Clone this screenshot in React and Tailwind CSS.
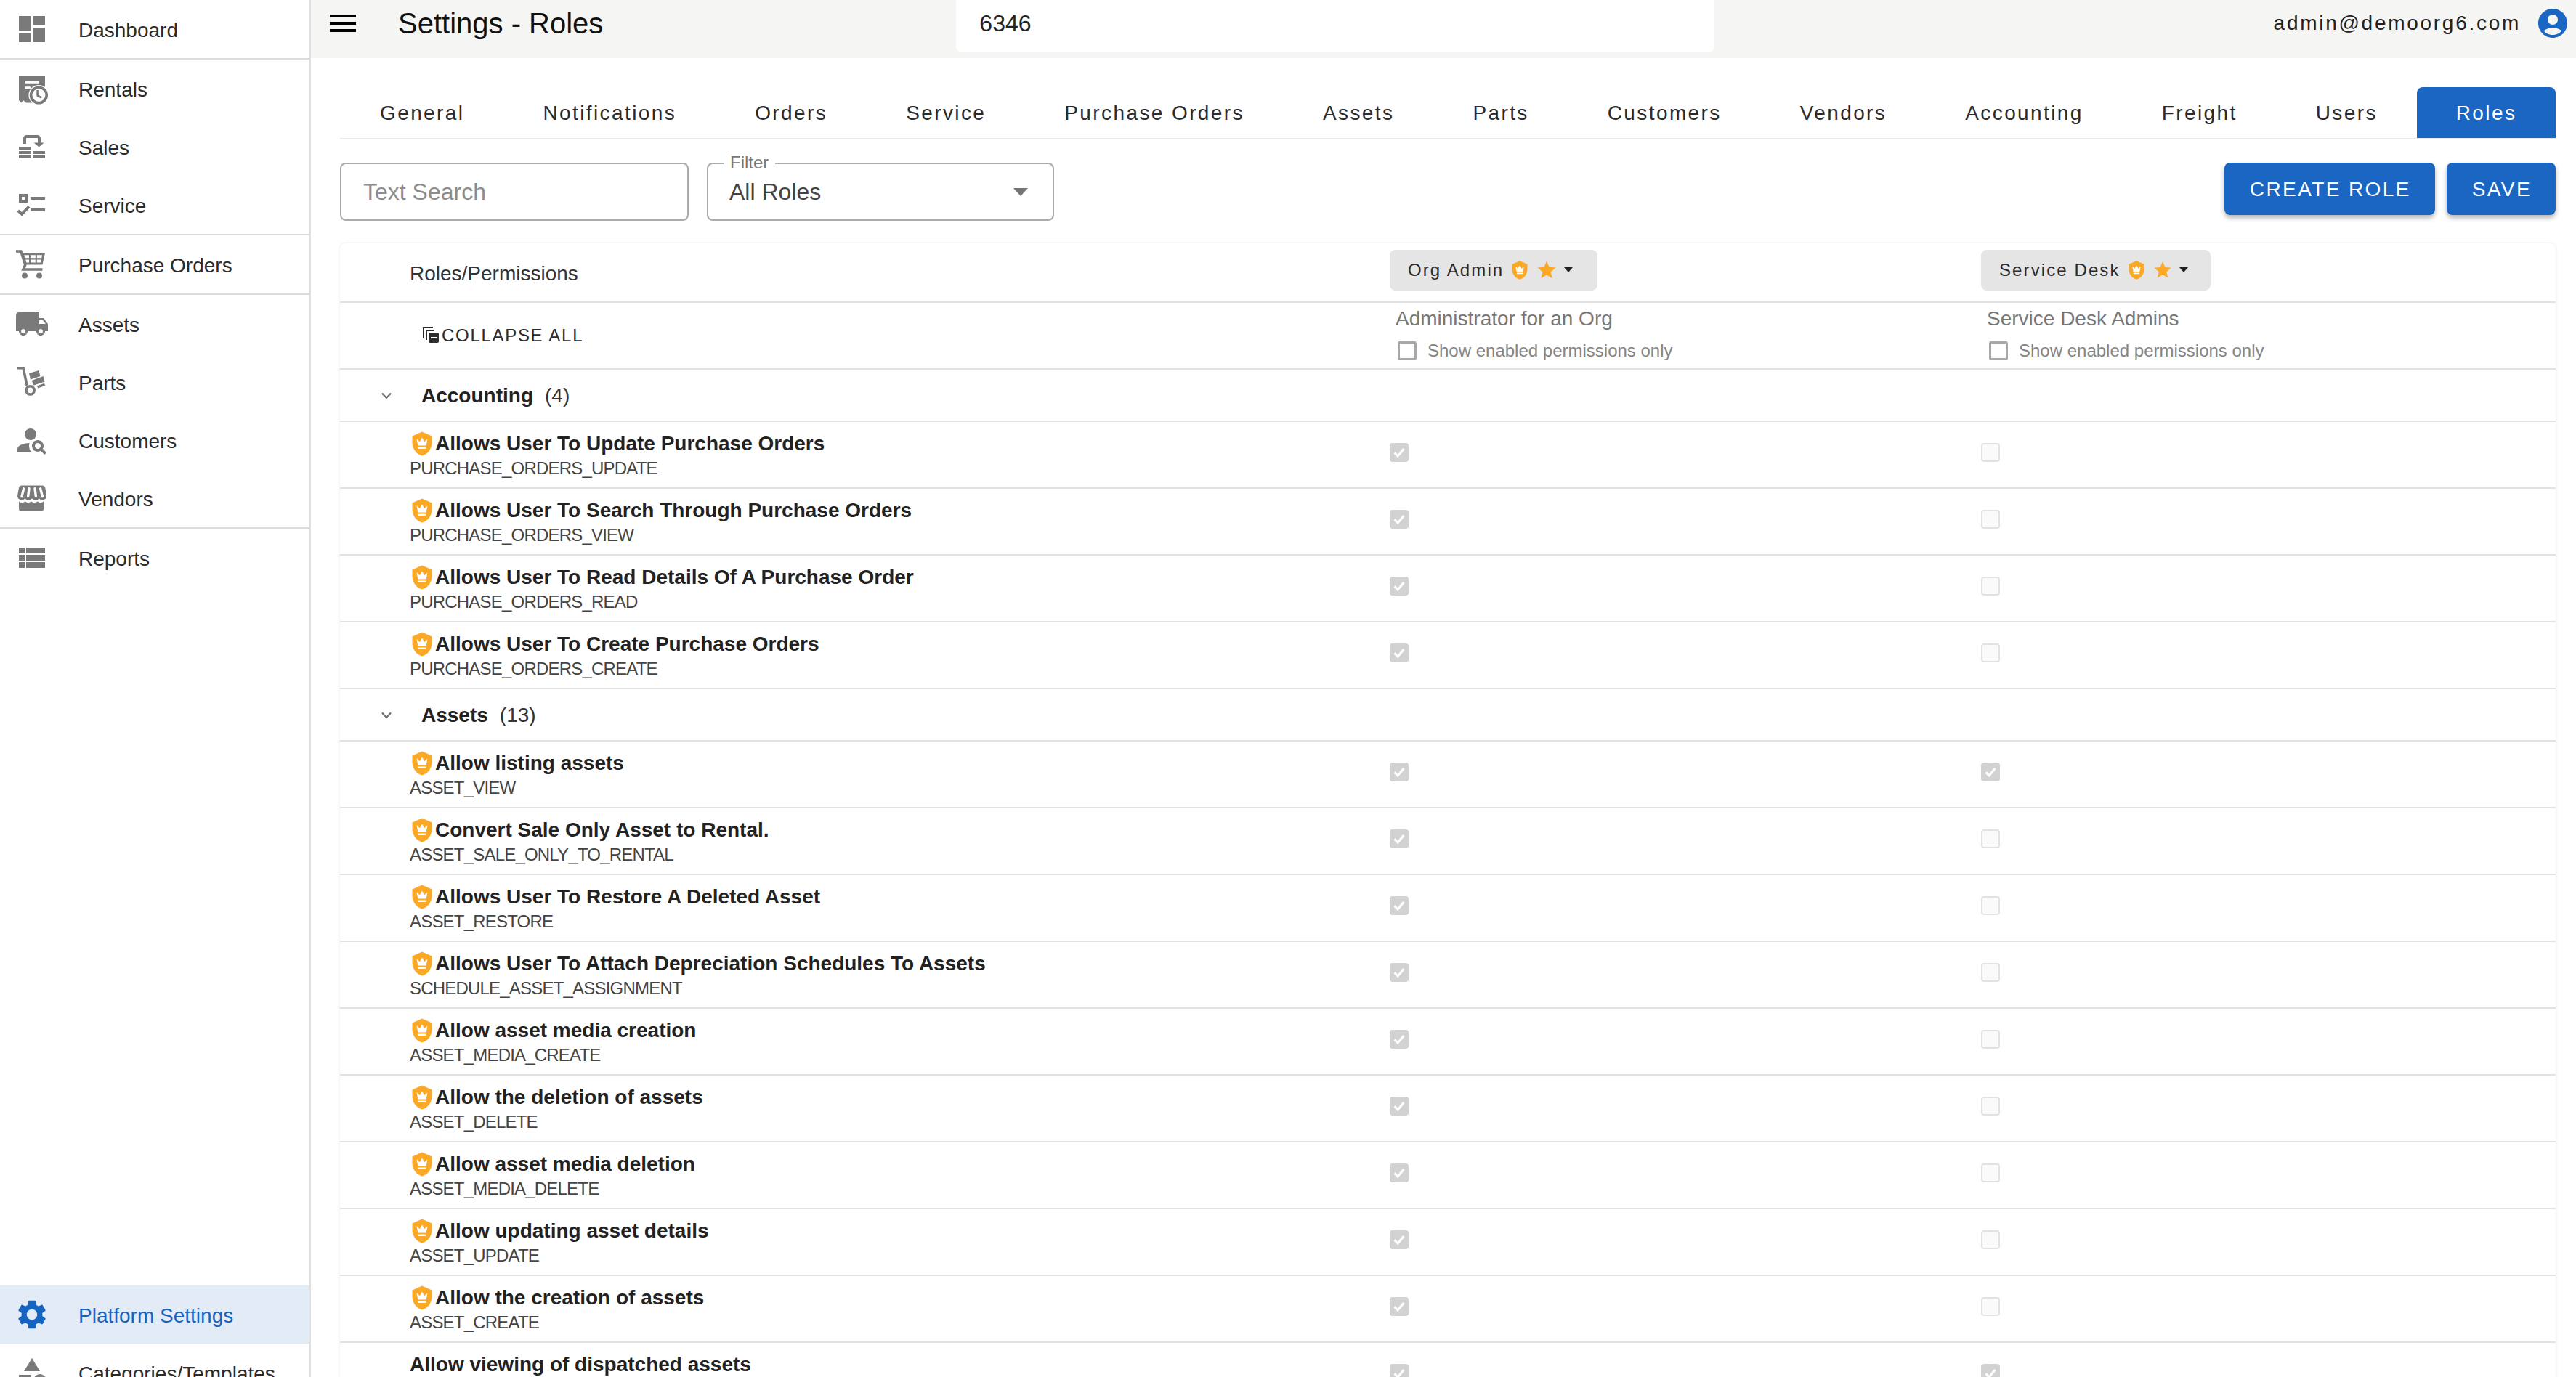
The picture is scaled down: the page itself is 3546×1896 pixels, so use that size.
import React from "react";

const G = "#7a7a7a";
const Svg = ({ size = 48, cls = "", fill = G, children }) => (
  <svg width={size} height={size} viewBox="0 0 24 24" fill={fill} className={`shrink-0 ${cls}`}>{children}</svg>
);

const icons = {
  dashboard: <path d="M3 13h8V3H3zm0 8h8v-6H3zm10 0h8V11h-8zm0-18v6h8V3z" />,
  rentals: (
    <>
      <path d="M3 3h18v12l-4 6.800h-9l-2-1.800-1.400 1.800L3 20z" />
      <path d="M7 7.700h10M7 11.300h4" stroke="#fff" strokeWidth="1.350" />
      <circle cx="16.700" cy="16.500" r="7" fill="#fff" />
      <circle cx="16.700" cy="16.500" r="5.400" fill="#fff" stroke={G} strokeWidth="1.800" />
      <path d="M15.800 13v3.700l2.800 1.600" fill="none" stroke={G} strokeWidth="1.300" />
    </>
  ),
  sales: (
    <>
      <path d="M3 12h8v2H3zM3 15h8v2H3zM3 18h8v2H3zM13 15h8v2h-8zM13 18h8v2h-8z" />
      <path d="M7 10V6.200a1.200 1.200 0 0 1 1.200-1.200H15.800a1.200 1.200 0 0 1 1.200 1.200V10" fill="none" stroke={G} strokeWidth="2" />
      <path d="M13.300 9.300h7l-3.500 3z" />
    </>
  ),
  service: (
    <>
      <path d="M3 4.500h6v6H3zm2 2v2h2v-2z" fillRule="evenodd" />
      <path d="M11 6.500h10v2H11zM11 14.500h10v2H11z" />
      <path d="M2.400 16l2.600 2.400 5-5.200" fill="none" stroke={G} strokeWidth="2" />
    </>
  ),
  cart: (
    <>
      <path d="M1 3h3.400l3 9.200-1.400 3.300h13.200" fill="none" stroke={G} strokeWidth="1.800" />
      <path d="M5 4.200h16l-1.800 8H7z" />
      <path d="M6.600 5.600h3.400v2h-2.800zM11 5.600h3.400v2H11zM15.400 5.600h3.600l-.4 2h-3.200zM7.600 8.800H10v2H8.200zM11 8.800h3.400v2H11zM15.400 8.800h2.900l-.4 2h-2.500z" fill="#fff" />
      <circle cx="7" cy="19.800" r="2" />
      <circle cx="17" cy="19.800" r="2" />
    </>
  ),
  truck: (
    <path d="M20 8h-3V4H3c-1.100 0-2 .9-2 2v11h2c0 1.660 1.340 3 3 3s3-1.340 3-3h6c0 1.660 1.340 3 3 3s3-1.340 3-3h2v-5zM6 18.500c-.83 0-1.500-.67-1.500-1.500s.67-1.500 1.500-1.500 1.500.67 1.500 1.500-.67 1.500-1.500 1.500m13.500-9 1.960 2.500H17V9.500zM18 18.500c-.83 0-1.500-.67-1.500-1.500s.67-1.500 1.500-1.500 1.500.67 1.500 1.500-.67 1.500-1.500 1.500" />
  ),
  parts: (
    <>
      <path d="M2 2.400h4l2.600 12" fill="none" stroke={G} strokeWidth="1.800" />
      <circle cx="10.800" cy="17.700" r="2.800" fill="none" stroke={G} strokeWidth="1.800" />
      <path d="M10 6l6.700-2 1 4-6.700 2.200zM11.700 11l8-3 1.100 3.800-7.500 2.500z" />
      <path d="M15.800 15.400l5-1.700" fill="none" stroke={G} strokeWidth="1.700" />
    </>
  ),
  customers: (
    <path d="M11 8m-4 0a4 4 0 1 0 8 0a4 4 0 1 0 -8 0 M10.350 14.010C7.620 13.910 2 15.270 2 18v2h9.540c-2.470-2.760-1.230-5.890-1.190-5.990 M19.430 18.020c.36-.59.57-1.280.57-2.020 0-2.210-1.790-4-4-4s-4 1.790-4 4 1.790 4 4 4c.74 0 1.430-.22 2.020-.57L20.590 22 22 20.590zM16 18c-1.100 0-2-.9-2-2s.9-2 2-2 2 .9 2 2-.9 2-2 2" fillRule="evenodd" />
  ),
  vendors: (
    <>
      <path d="M3 14.200c1.400 1 2.900 1 4.300 0 1.400 1 2.800 1 4.200 0 1.400 1 2.900 1 4.300 0 1.400 1 2.800 1 4.200 0v5a1.500 1.500 0 0 1-1.500 1.500H4.500A1.500 1.500 0 0 1 3 19.200z" />
      <path d="M5 3.200h14c1 0 1.800.6 2.100 1.600l.9 5c.4 2-1 3.400-2.700 3.400-1.100 0-1.800-.4-2.400-1-.6.6-1.400 1-2.400 1s-1.800-.4-2.500-1c-.6.6-1.400 1-2.400 1s-1.800-.4-2.400-1c-.6.6-1.300 1-2.400 1-1.700 0-3.100-1.400-2.700-3.400l.9-5c.3-1 1.100-1.600 2-1.600z" />
      <path d="M6.300 5.400l-1.300 5.400M10 5.400l-.7 5.400M14 5.400l.7 5.400M17.800 5.400l1.400 5.400" stroke="#fff" strokeWidth="1.700" strokeLinecap="round" />
    </>
  ),
  reports: <path d="M3 14h4v-4H3zm0 5h4v-4H3zM3 9h4V5H3zm5 5h13v-4H8zm0 5h13v-4H8zM8 5v4h13V5z" />,
  categories: (
    <path d="M12 2l-5.500 9h11z M17.500 17.500m-4.500 0a4.500 4.500 0 1 0 9 0a4.500 4.500 0 1 0 -9 0 M3 13.500h8v8H3z" />
  ),
};

const NavItem = ({ icon, label, active }) => (
  <div className={`flex h-[80px] items-center pl-[20px] ${active ? "bg-[#e3ebf7]" : ""}`}>
    {active ? (
      <Svg fill="#1565c0">
        <path d="M19.140 12.940c.04-.3.06-.61.06-.94 0-.32-.02-.64-.07-.94l2.030-1.580c.18-.14.23-.41.12-.61l-1.920-3.320c-.12-.22-.37-.29-.59-.22l-2.390.96c-.5-.38-1.030-.7-1.620-.94l-.36-2.540c-.04-.24-.24-.41-.48-.41h-3.840c-.24 0-.43.17-.47.41l-.36 2.540c-.59.24-1.130.57-1.620.94l-2.390-.96c-.22-.08-.47 0-.59.22L2.740 8.870c-.12.21-.08.47.12.61l2.030 1.580c-.05.3-.09.63-.09.94s.02.64.07.94l-2.030 1.580c-.18.14-.23.41-.12.61l1.920 3.320c.12.22.37.29.59.22l2.390-.96c.5.38 1.030.7 1.620.94l.36 2.540c.05.24.24.41.48.41h3.840c.24 0 .44-.17.47-.41l.36-2.540c.59-.24 1.130-.56 1.620-.94l2.390.96c.22.08.47 0 .59-.22l1.920-3.320c.12-.22.07-.47-.12-.61zM12 15.600c-1.980 0-3.600-1.620-3.600-3.600s1.620-3.600 3.600-3.600 3.600 1.620 3.600 3.600-1.620 3.600-3.600 3.600" />
      </Svg>
    ) : (
      <Svg>{icons[icon]}</Svg>
    )}
    <span className={`ml-[40px] pt-[3px] text-[28px] leading-[36px] ${active ? "text-[#1565c0]" : "text-[#2b2b2b]"}`}>{label}</span>
  </div>
);

const Divider = () => <div className="h-[2px] bg-[#dcdcdc]" />;

const Shield = ({ size = 36, cls = "" }) => (
  <Svg size={size} fill="#faa825" cls={cls}>
    <path d="M12 1 3 5v6c0 5.550 3.840 10.740 9 12 5.160-1.260 9-6.450 9-12V5z" />
    <path d="M7 7.500l2.800 2.600L12 6.400l2.200 3.700L17 7.500l-1.200 6.200H8.200z M8.400 15h7.200v1.600H8.400z" fill="#fff" />
  </Svg>
);

const Star = ({ size = 30 }) => (
  <Svg size={size} fill="#faa825">
    <path d="M12 17.270 18.180 21l-1.640-7.030L22 9.240l-7.190-.61L12 2 9.190 8.630 2 9.240l5.460 4.730L5.820 21z" />
  </Svg>
);

const Caret = () => (
  <svg width="12" height="7" viewBox="0 0 12 7" fill="#222" className="shrink-0">
    <path d="M0 0h12L6 7z" />
  </svg>
);

const RoleChip = ({ label, w, star }) => (
  <div className={`flex h-[56px] items-center rounded-[8px] bg-[#e5e5e5] pl-[25px] ${w}`}>
    <span className="text-[24px] leading-[32px] tracking-[2.100px] text-[#2b2b2b]">{label}</span>
    <Shield size={28} cls="ml-[8px]" />
    <span className="ml-[8px] flex"><Star size={star} /></span>
    <span className="ml-[9px] flex -translate-y-[1px]"><Caret /></span>
  </div>
);

const RoleBox = ({ checked }) =>
  checked ? (
    <div className="flex h-[26px] w-[26px] items-center justify-center rounded-[4px] bg-[#d2d2d2]">
      <svg width="22" height="22" viewBox="0 0 24 24" fill="none" stroke="#fff" strokeWidth="3.400">
        <path d="M5 12.500l5 5 9-11" />
      </svg>
    </div>
  ) : (
    <div className="h-[26px] w-[26px] rounded-[4px] border-2 border-[#e2e2e2] bg-[#fafafa]" />
  );

const OutlineBox = () => <div className="h-[26px] w-[26px] rounded-[3px] border-[3px] border-[#a8a8a8] bg-white" />;

const tabs = ["General", "Notifications", "Orders", "Service", "Purchase Orders", "Assets", "Parts", "Customers", "Vendors", "Accounting", "Freight", "Users"];

const groups = [
  {
    name: "Accounting",
    count: 4,
    rows: [
      ["Allows User To Update Purchase Orders", "PURCHASE_ORDERS_UPDATE"],
      ["Allows User To Search Through Purchase Orders", "PURCHASE_ORDERS_VIEW"],
      ["Allows User To Read Details Of A Purchase Order", "PURCHASE_ORDERS_READ"],
      ["Allows User To Create Purchase Orders", "PURCHASE_ORDERS_CREATE"],
    ],
  },
  {
    name: "Assets",
    count: 13,
    rows: [
      ["Allow listing assets", "ASSET_VIEW", true],
      ["Convert Sale Only Asset to Rental.", "ASSET_SALE_ONLY_TO_RENTAL"],
      ["Allows User To Restore A Deleted Asset", "ASSET_RESTORE"],
      ["Allows User To Attach Depreciation Schedules To Assets", "SCHEDULE_ASSET_ASSIGNMENT"],
      ["Allow asset media creation", "ASSET_MEDIA_CREATE"],
      ["Allow the deletion of assets", "ASSET_DELETE"],
      ["Allow asset media deletion", "ASSET_MEDIA_DELETE"],
      ["Allow updating asset details", "ASSET_UPDATE"],
      ["Allow the creation of assets", "ASSET_CREATE"],
      ["Allow viewing of dispatched assets", "", true, true],
    ],
  },
];

const borderRow = "border-b-2 border-[#e2e2e2]";

const PermRow = ({ title, sub, second, noShield }) => (
  <div className={`flex h-[92px] ${borderRow}`}>
    <div className="w-[1445px] pl-[96px] pt-[14px]">
      <div className="flex h-[32px] items-center">
        {!noShield && <Shield cls="-ml-[1px]" />}
        <span className="text-[28px] font-bold leading-[32px] text-[#222]">{title}</span>
      </div>
      <div className="text-[24px] leading-[36px] tracking-[-0.8px] text-[#444]">{sub}</div>
    </div>
    <div className="w-[814px] pt-[29px]"><RoleBox checked /></div>
    <div className="flex-1 pt-[29px]"><RoleBox checked={second} /></div>
  </div>
);

const RoleInfo = ({ desc }) => (
  <div className="pl-[8px] pt-[6px]">
    <div className="text-[28px] leading-[32px] text-[#777]">{desc}</div>
    <div className="mt-[14px] flex items-center">
      <span className="ml-[3px] flex"><OutlineBox /></span>
      <span className="ml-[15px] text-[24px] leading-[28px] text-[#858585]">Show enabled permissions only</span>
    </div>
  </div>
);

export default function App() {
  return (
    <div className="flex h-[1896px] w-[3546px] overflow-hidden bg-white font-['Liberation_Sans',Arial,sans-serif] text-[#222]">
      <aside className="w-[428px] shrink-0 border-r-2 border-[#e0e0e0]">
        <NavItem icon="dashboard" label="Dashboard" />
        <Divider />
        <NavItem icon="rentals" label="Rentals" />
        <NavItem icon="sales" label="Sales" />
        <NavItem icon="service" label="Service" />
        <Divider />
        <NavItem icon="cart" label="Purchase Orders" />
        <Divider />
        <NavItem icon="truck" label="Assets" />
        <NavItem icon="parts" label="Parts" />
        <NavItem icon="customers" label="Customers" />
        <NavItem icon="vendors" label="Vendors" />
        <Divider />
        <NavItem icon="reports" label="Reports" />
        <div className="mt-[962px]">
          <NavItem active label="Platform Settings" />
          <NavItem icon="categories" label="Categories/Templates" />
        </div>
      </aside>

      <main className="min-w-0 flex-1">
        <header className="flex h-[80px] items-start bg-[#f5f5f3]">
          <div className="ml-[20px] mt-[8px] flex">
            <Svg fill="#000"><path d="M3 18h18v-2H3zm0-5h18v-2H3zm0-5h18V6H3z" /></Svg>
          </div>
          <h1 className="ml-[52px] mt-[12px] text-[40px] font-normal leading-[40px] text-[#111]">Settings - Roles</h1>
          <div className="ml-[486px] flex h-[72px] w-[1044px] items-center rounded-b-[8px] bg-white pl-[32px] pb-[8px] text-[32px] text-[#222]">6346</div>
          <div className="ml-auto mt-[8px] flex items-center pr-[8px]">
            <span className="text-[28px] leading-[48px] tracking-[2.720px] text-[#222]">admin@demoorg6.com</span>
            <Svg fill="#1a66c2" cls="ml-[20px]">
              <path d="M12 2C6.480 2 2 6.480 2 12s4.480 10 10 10 10-4.480 10-10S17.520 2 12 2m0 4c1.930 0 3.500 1.570 3.500 3.500S13.930 13 12 13s-3.500-1.570-3.500-3.500S10.070 6 12 6m0 14c-2.030 0-4.430-.82-6.140-2.880C7.550 15.800 9.680 15 12 15s4.450.8 6.140 2.120C16.430 19.180 14.030 20 12 20" />
            </Svg>
          </div>
        </header>

        <div className="ml-[40px] mr-[28px] mt-[40px]">
          <nav className="flex h-[72px] items-stretch border-b-2 border-[#e8e8e8]">
            <div className="flex min-w-0 flex-1 pl-[1px]">
              {tabs.map((t) => (
                <div key={t} className="flex h-[70px] shrink-0 items-center whitespace-nowrap px-[54px] pt-[2px] text-[28px] tracking-[2.400px] text-[#2b2b2b]">{t}</div>
              ))}
            </div>
            <div className="relative flex h-[70px] w-[191px] shrink-0 items-center justify-center rounded-t-[8px] bg-[#1a66c2] pt-[2px] text-[28px] tracking-[2.400px] text-white">Roles</div>
          </nav>

          <div className="mt-[32px] flex items-start">
            <input
              placeholder="Text Search"
              className="h-[80px] w-[480px] rounded-[8px] border-2 border-[#ababab] pl-[30px] text-[32px] outline-none placeholder:text-[#8c8c8c]"
            />
            <div className="relative ml-[25px] flex h-[80px] w-[478px] items-center justify-between rounded-[8px] border-2 border-[#ababab] pl-[29px] pr-[34px]">
              <span className="absolute -top-[16px] left-[21px] bg-white px-[9px] text-[24px] leading-[28px] text-[#777]">Filter</span>
              <span className="text-[32px] text-[#444]">All Roles</span>
              <svg width="20" height="11" viewBox="0 0 20 11" fill="#757575"><path d="M0 0h20L10 11z" /></svg>
            </div>
            <button className="ml-auto h-[72px] rounded-[8px] bg-[#1a66c2] pl-[35px] pr-[33px] pt-[1px] text-[28px] tracking-[2.400px] text-white shadow-[0_4px_6px_rgba(0,0,0,0.3)]">CREATE ROLE</button>
            <button className="ml-[16px] h-[72px] rounded-[8px] bg-[#1a66c2] pl-[35px] pr-[33px] pt-[1px] text-[28px] tracking-[2.400px] text-white shadow-[0_4px_6px_rgba(0,0,0,0.3)]">SAVE</button>
          </div>

          <section className="mt-[31px] rounded-[8px] bg-white shadow-[0_0_4px_rgba(0,0,0,0.1)]">
            <div className={`flex h-[82px] ${borderRow}`}>
              <div className="flex w-[1445px] items-center pl-[96px] pt-[4px] text-[28px] text-[#333]">Roles/Permissions</div>
              <div className="w-[814px] pt-[9px]"><RoleChip label="Org Admin" w="w-[286px]" star={30} /></div>
              <div className="flex-1 pt-[9px]"><RoleChip label="Service Desk" w="w-[316px]" star={28} /></div>
            </div>
            <div className={`flex h-[92px] ${borderRow}`}>
              <div className="flex w-[1445px] items-start pl-[114px] pt-[33px]">
                <svg width="22" height="22" viewBox="0 0 22 22" fill="#2b2b2b" className="shrink-0">
                  <path d="M0 0h14v2H2v14H0z" />
                  <path d="M4 4h12v2H6v12H4z" />
                  <rect x="8" y="8" width="14" height="14" rx="2" />
                  <rect x="11" y="14" width="8" height="2" fill="#fff" />
                </svg>
                <span className="ml-[4px] text-[24px] leading-[24px] tracking-[1.700px] text-[#2b2b2b]">COLLAPSE ALL</span>
              </div>
              <div className="w-[814px]"><RoleInfo desc="Administrator for an Org" /></div>
              <div className="flex-1"><RoleInfo desc="Service Desk Admins" /></div>
            </div>
            {groups.map((g) => (
              <React.Fragment key={g.name}>
                <div className={`flex h-[72px] items-center ${borderRow} pl-[52px] pt-[1px]`}>
                  <svg width="24" height="24" viewBox="0 0 24 24" fill="none" stroke="#6e6e6e" strokeWidth="2.200" className="shrink-0">
                    <path d="M6 8.500l6 6.500 6-6.500" />
                  </svg>
                  <span className="ml-[36px] text-[28px] font-bold text-[#222]">{g.name}</span>
                  <span className="ml-[16px] text-[28px] text-[#333]">({g.count})</span>
                </div>
                {g.rows.map((r) => (
                  <PermRow key={r[0]} title={r[0]} sub={r[1]} second={r[2]} noShield={r[3]} />
                ))}
              </React.Fragment>
            ))}
          </section>
        </div>
      </main>
    </div>
  );
}
